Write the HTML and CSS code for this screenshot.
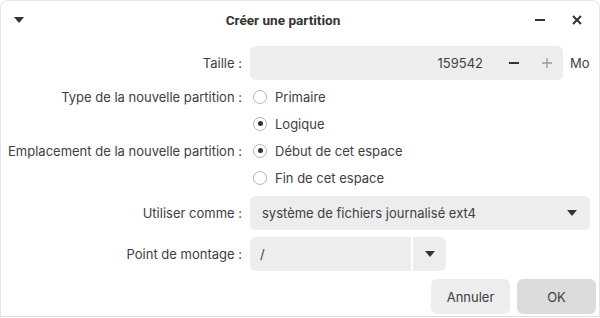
FILE: index.html
```html
<!DOCTYPE html>
<html lang="fr">
<head>
<meta charset="utf-8">
<link rel="stylesheet" href="styles.css">
</head>
<body>
<div class="window">
  <header class="titlebar">
    <span class="tb-menu"><svg width="10" height="6" viewBox="0 0 10 6"><path d="M0 0H10L5 6Z" fill="#333"/></svg></span>
    <span class="title">Créer une partition</span>
    <span class="tb-btns">
      <svg class="tb-min" width="10" height="10" viewBox="0 0 10 10"><rect x="0" y="4" width="10" height="2" fill="#333"/></svg>
      <svg class="tb-close" width="10" height="10" viewBox="0 0 10 10"><path d="M1 1L9 9M9 1L1 9" stroke="#333" stroke-width="2"/></svg>
    </span>
  </header>
  <main class="form">
    <div class="row row-spin">
      <label class="lbl">Taille :</label>
      <div class="field spin-wrap">
        <div class="spin">
          <span class="spin-val">159542</span>
          <span class="spin-btn"><svg width="10" height="10" viewBox="0 0 10 10"><rect x="0" y="4" width="10" height="2" fill="#333"/></svg></span>
          <span class="spin-btn dim"><svg width="10" height="10" viewBox="0 0 10 10"><path d="M0 5H10M5 0V10" stroke="#999" stroke-width="1.4"/></svg></span>
        </div>
        <span class="unit">Mo</span>
      </div>
    </div>
    <div class="row row-radio">
      <label class="lbl">Type de la nouvelle partition :</label>
      <div class="field radio"><span class="rb"></span>Primaire</div>
    </div>
    <div class="row row-radio">
      <span class="lbl"></span>
      <div class="field radio"><span class="rb on"></span>Logique</div>
    </div>
    <div class="row row-radio">
      <label class="lbl">Emplacement de la nouvelle partition :</label>
      <div class="field radio"><span class="rb on"></span>Début de cet espace</div>
    </div>
    <div class="row row-radio">
      <span class="lbl"></span>
      <div class="field radio"><span class="rb"></span>Fin de cet espace</div>
    </div>
    <div class="row row-combo">
      <label class="lbl">Utiliser comme :</label>
      <div class="field combo">
        <span class="combo-text">système de fichiers journalisé ext4</span>
        <svg width="10" height="6" viewBox="0 0 10 6"><path d="M0 0H10L5 6Z" fill="#333"/></svg>
      </div>
    </div>
    <div class="row row-entry">
      <label class="lbl">Point de montage :</label>
      <div class="field entry-wrap">
        <span class="entry">/</span>
        <span class="entry-btn"><svg width="10" height="6" viewBox="0 0 10 6"><path d="M0 0H10L5 6Z" fill="#333"/></svg></span>
      </div>
    </div>
    <div class="actions">
      <button class="btn">Annuler</button>
      <button class="btn btn-ok">OK</button>
    </div>
  </main>
</div>
</body>
</html>
```
FILE: styles.css
```css
* { box-sizing: border-box; }
html, body { margin: 0; padding: 0; background: #ffffff; }
body {
  width: 600px;
  height: 318px;
  overflow: hidden;
  font-family: Inter, "Noto Sans", sans-serif;
  font-size: 13px;
  color: #404040;
}
.window {
  width: 600px;
  height: 317px;
  border: 1px solid #e4e4e4;
  border-bottom-color: #dcdcdc;
  border-radius: 8px 8px 0 0;
  background: #ffffff;
  display: flex;
  flex-direction: column;
}
.titlebar {
  height: 36px;
  flex: none;
  display: flex;
  align-items: center;
  position: relative;
  padding: 1px 0 0 13px;
}
.tb-menu { display: flex; }
.title {
  position: absolute;
  left: 0; right: 34px;
  text-align: center;
  font-family: Roboto, sans-serif;
  font-weight: 700;
  font-size: 13.6px;
  color: #333;
  pointer-events: none;
}
.tb-btns {
  margin-left: auto;
  display: flex;
  align-items: center;
  gap: 27px;
  padding-right: 17px;
}
.form {
  display: flex;
  flex-direction: column;
  padding: 9px 9px 0 0;
}
.row {
  display: grid;
  grid-template-columns: 241px 1fr;
  column-gap: 8px;
  align-items: center;
}
.lbl { text-align: right; white-space: nowrap; }
.row-spin { height: 34px; margin-bottom: 3px; }
.row-radio { height: 27px; }
.row-combo { height: 34px; margin-top: 5px; }
.row-entry { height: 34px; margin-top: 7px; }
.spin-wrap { display: flex; align-items: center; gap: 7px; height: 34px; }
.spin {
  flex: 1;
  height: 34px;
  background: #ededed;
  border-radius: 6px;
  display: flex;
  align-items: center;
  justify-content: flex-end;
  padding-right: 0;
}
.spin-val { margin-right: 14px; }
.spin-btn { width: 33px; display: flex; justify-content: center; }
.unit { width: 20px; }
.radio { display: flex; align-items: center; gap: 8px; padding-left: 3px; }
.rb {
  width: 14px; height: 14px;
  border: 1px solid #b5b5b5;
  border-radius: 50%;
  background: #fff;
  display: flex; align-items: center; justify-content: center;
}
.rb.on::after {
  content: "";
  width: 5px; height: 5px;
  border-radius: 50%;
  background: #333;
}
.combo {
  height: 34px;
  background: #ededed;
  border-radius: 6px;
  display: flex;
  align-items: center;
  justify-content: space-between;
  padding: 0 13px 0 12px;
}
.entry-wrap { display: flex; height: 34px; }
.entry {
  width: 161px;
  background: #ededed;
  border-radius: 6px 0 0 6px;
  display: flex; align-items: center;
  padding-left: 10px;
}
.entry-btn {
  width: 33px;
  margin-left: 2px;
  background: #ededed;
  border-radius: 0 6px 6px 0;
  display: flex; align-items: center; justify-content: center;
}
.actions {
  display: flex;
  justify-content: flex-end;
  gap: 7px;
  margin-top: 8px;
  margin-right: -6px;
}
.btn {
  width: 79px;
  height: 35px;
  border: none;
  border-radius: 6px;
  background: #ededed;
  font-family: inherit;
  font-size: 13px;
  color: #404040;
}
.btn-ok { background: #dcdcdc; }
```
